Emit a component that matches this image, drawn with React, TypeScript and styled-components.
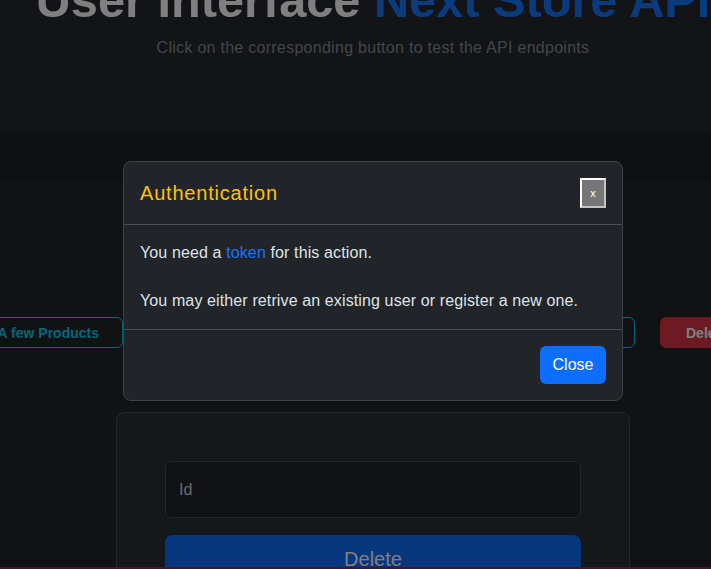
import React from "react";
import styled, { createGlobalStyle } from "styled-components";

const Global = createGlobalStyle`
  html, body {
    margin: 0;
    padding: 0;
    overflow: hidden;
    background: #212529;
    font-family: "Liberation Sans", Arial, sans-serif;
  }
  * { box-sizing: border-box; }
`;

const Page = styled.div`
  width: 746px;
  min-height: 569px;
  background: #212529;
  color: #dee2e6;
`;

const Hero = styled.header`
  background: #26282e;
  height: 133px;
  text-align: center;
  display: flex;
  flex-direction: column;
  align-items: center;
`;

const Title = styled.h1`
  margin: -29px 0 0;
  font-size: 48.7px;
  line-height: 58px;
  font-weight: 700;
  color: #ffffff;
  white-space: nowrap;
`;

const Accent = styled.span`
  color: #1577fe;
`;

const Subtitle = styled.p`
  margin: 7px 0 0;
  font-size: 16px;
  letter-spacing: 0.28px;
  line-height: 24px;
  color: #878c92;
`;

const Band = styled.nav`
  height: 47px;
  background: #1e2024;
`;

const Main = styled.main`
  padding-top: 137px;
  display: flex;
  flex-direction: column;
  align-items: center;
`;

const ButtonRow = styled.div`
  width: 100%;
  display: flex;
  justify-content: center;
  gap: 25px;
`;

const RowButton = styled.button<{ $w: number; $variant: "info" | "danger" }>`
  flex: 0 0 auto;
  width: ${(p) => p.$w}px;
  height: 31px;
  border-radius: 6px;
  font-family: inherit;
  font-size: 14px;
  font-weight: 700;
  text-align: right;
  padding: 0 23px 0 8px;
  border: 1px solid ${(p) => (p.$variant === "info" ? "#0dcaf0" : "#dc3545")};
  background: ${(p) => (p.$variant === "info" ? "transparent" : "#dc3545")};
  color: ${(p) => (p.$variant === "info" ? "#0dcaf0" : "#ffffff")};
  ${(p) => p.$variant === "danger" && "text-align: left; padding: 0 12px 0 25px;"}
`;

const Card = styled.section`
  margin-top: 64px;
  width: 514px;
  background: #2b3036;
  border: 1px solid #4a5057;
  border-radius: 8px;
  padding: 48px;
  display: flex;
  flex-direction: column;
  gap: 17px;
`;

const Field = styled.div`
  height: 57px;
  background: #212529;
  border: 1px solid #4a5057;
  border-radius: 6px;
  display: flex;
  align-items: center;
  padding: 0 13px;
  font-size: 16px;
  color: #d2d6da;
`;

const BigButton = styled.button`
  height: 48px;
  border: none;
  border-radius: 8px;
  background: #0d6efd;
  color: #ffffff;
  font-family: inherit;
  font-size: 20px;
  line-height: 30px;
`;

const Backdrop = styled.div`
  position: fixed;
  top: 0;
  left: 0;
  width: 746px;
  height: 100%;
  background: rgba(0, 0, 0, 0.5);
  display: flex;
  justify-content: center;
  align-items: flex-start;
  padding-top: 161px;
`;

const Dialog = styled.div`
  width: 500px;
  background: #212529;
  border: 1px solid #3e4246;
  border-radius: 8px;
  color: #dee2e6;
`;

const DialogHeader = styled.div`
  display: flex;
  align-items: center;
  justify-content: space-between;
  padding: 16px;
  border-bottom: 1px solid #4b4f54;
`;

const DialogTitle = styled.h5`
  margin: 0;
  font-size: 20px;
  letter-spacing: 0.8px;
  line-height: 30px;
  font-weight: 500;
  color: #ffc107;
`;

const XButton = styled.button`
  width: 26px;
  height: 30px;
  padding: 0;
  background: #767676;
  color: #ffffff;
  font-family: inherit;
  font-size: 11px;
  border-style: solid;
  border-width: 2px;
  border-color: #ffffff #c4c4c4 #c4c4c4 #ffffff;
`;

const DialogBody = styled.div`
  padding: 16px;
  font-size: 16px;
  letter-spacing: 0.12px;
  line-height: 24px;
`;

const Link = styled.a`
  color: #1a72fd;
  text-decoration: none;
`;

const DialogFooter = styled.div`
  display: flex;
  justify-content: flex-end;
  padding: 12px;
  border-top: 1px solid #4b4f54;
`;

const PrimaryButton = styled.button`
  margin: 4px;
  height: 38px;
  width: 66px;
  padding: 0;
  border: none;
  border-radius: 6px;
  background: #0d6efd;
  color: #ffffff;
  font-family: inherit;
  font-size: 16px;
`;

const BottomStrip = styled.div`
  position: fixed;
  left: 0;
  right: 0;
  bottom: 0;
  height: 2px;
  background: #3b1a2a;
`;

export default function App() {
  return (
    <>
      <Global />
      <Page>
        <Hero>
          <Title>
            User Interface <Accent>Next Store API</Accent>
          </Title>
          <Subtitle>Click on the corresponding button to test the API endpoints</Subtitle>
        </Hero>
        <Band />
        <Main>
          <ButtonRow>
            <RowButton $w={187} $variant="info">Get A few Products</RowButton>
            <RowButton $w={487} $variant="info">Get Product by Id</RowButton>
            <RowButton $w={150} $variant="danger">Delete Product</RowButton>
          </ButtonRow>
          <Card>
            <Field>Id</Field>
            <BigButton>Delete</BigButton>
          </Card>
        </Main>
      </Page>
      <Backdrop>
        <Dialog role="dialog">
          <DialogHeader>
            <DialogTitle>Authentication</DialogTitle>
            <XButton>x</XButton>
          </DialogHeader>
          <DialogBody>
            You need a <Link href="#">token</Link> for this action.
            <br />
            <br />
            You may either retrive an existing user or register a new one.
          </DialogBody>
          <DialogFooter>
            <PrimaryButton>Close</PrimaryButton>
          </DialogFooter>
        </Dialog>
      </Backdrop>
      <BottomStrip />
    </>
  );
}
